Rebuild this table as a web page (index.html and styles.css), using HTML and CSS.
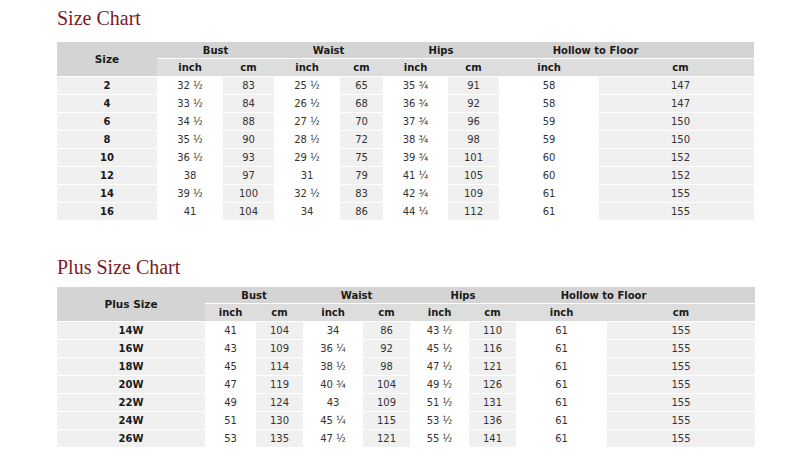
FILE: index.html
```html
<!DOCTYPE html>
<html>
<head>
<meta charset="utf-8">
<link rel="stylesheet" href="styles.css">
</head>
<body>
<div class="page">
  <h2 class="title first">Size Chart</h2>
  <table class="chart t1">
    <colgroup><col><col><col><col><col><col><col><col><col></colgroup>
    <thead>
      <tr class="h1"><th rowspan="2" class="lead">Size</th><th colspan="2">Bust</th><th colspan="2">Waist</th><th colspan="2">Hips</th><th colspan="2" class="hollow">Hollow to Floor</th></tr>
      <tr class="h2"><th>inch</th><th>cm</th><th>inch</th><th>cm</th><th>inch</th><th>cm</th><th>inch</th><th>cm</th></tr>
    </thead>
    <tbody>
      <tr><td>2</td><td>32 ½</td><td>83</td><td>25 ½</td><td>65</td><td>35 ¾</td><td>91</td><td>58</td><td>147</td></tr>
      <tr><td>4</td><td>33 ½</td><td>84</td><td>26 ½</td><td>68</td><td>36 ¾</td><td>92</td><td>58</td><td>147</td></tr>
      <tr><td>6</td><td>34 ½</td><td>88</td><td>27 ½</td><td>70</td><td>37 ¾</td><td>96</td><td>59</td><td>150</td></tr>
      <tr><td>8</td><td>35 ½</td><td>90</td><td>28 ½</td><td>72</td><td>38 ¾</td><td>98</td><td>59</td><td>150</td></tr>
      <tr><td>10</td><td>36 ½</td><td>93</td><td>29 ½</td><td>75</td><td>39 ¾</td><td>101</td><td>60</td><td>152</td></tr>
      <tr><td>12</td><td>38</td><td>97</td><td>31</td><td>79</td><td>41 ¼</td><td>105</td><td>60</td><td>152</td></tr>
      <tr><td>14</td><td>39 ½</td><td>100</td><td>32 ½</td><td>83</td><td>42 ¾</td><td>109</td><td>61</td><td>155</td></tr>
      <tr><td>16</td><td>41</td><td>104</td><td>34</td><td>86</td><td>44 ¼</td><td>112</td><td>61</td><td>155</td></tr>
    </tbody>
  </table>

  <h2 class="title second">Plus Size Chart</h2>
  <table class="chart t2">
    <colgroup><col><col><col><col><col><col><col><col><col></colgroup>
    <thead>
      <tr class="h1"><th rowspan="2" class="lead">Plus Size</th><th colspan="2">Bust</th><th colspan="2">Waist</th><th colspan="2">Hips</th><th colspan="2" class="hollow">Hollow to Floor</th></tr>
      <tr class="h2"><th>inch</th><th>cm</th><th>inch</th><th>cm</th><th>inch</th><th>cm</th><th>inch</th><th>cm</th></tr>
    </thead>
    <tbody>
      <tr><td>14W</td><td>41</td><td>104</td><td>34</td><td>86</td><td>43 ½</td><td>110</td><td>61</td><td>155</td></tr>
      <tr><td>16W</td><td>43</td><td>109</td><td>36 ¼</td><td>92</td><td>45 ½</td><td>116</td><td>61</td><td>155</td></tr>
      <tr><td>18W</td><td>45</td><td>114</td><td>38 ½</td><td>98</td><td>47 ½</td><td>121</td><td>61</td><td>155</td></tr>
      <tr><td>20W</td><td>47</td><td>119</td><td>40 ¾</td><td>104</td><td>49 ½</td><td>126</td><td>61</td><td>155</td></tr>
      <tr><td>22W</td><td>49</td><td>124</td><td>43</td><td>109</td><td>51 ½</td><td>131</td><td>61</td><td>155</td></tr>
      <tr><td>24W</td><td>51</td><td>130</td><td>45 ¼</td><td>115</td><td>53 ½</td><td>136</td><td>61</td><td>155</td></tr>
      <tr><td>26W</td><td>53</td><td>135</td><td>47 ½</td><td>121</td><td>55 ½</td><td>141</td><td>61</td><td>155</td></tr>
    </tbody>
  </table>
</div>
</body>
</html>
```

FILE: styles.css
```css
html, body {
  margin: 0;
  padding: 0;
  background: #ffffff;
}

.page {
  padding-left: 57px;
  padding-top: 6px;
}

.title {
  margin: 0;
  font-family: "Liberation Serif", "Times New Roman", serif;
  font-weight: normal;
  font-size: 20px;
  line-height: 24px;
  color: #7a1b25;
}

.title.first {
  margin-bottom: 11px;
}

.title.second {
  margin-top: 34px;
  margin-bottom: 7px;
}

.chart {
  border-collapse: separate;
  border-spacing: 0 1px;
  table-layout: fixed;
  font-family: "DejaVu Sans", Verdana, sans-serif;
  font-size: 10px;
  color: #333333;
}

.chart th,
.chart td {
  padding: 0;
  text-align: center;
  vertical-align: middle;
  white-space: nowrap;
}

.chart th {
  font-weight: bold;
  color: #1a1a1a;
}

.chart .h1 th {
  height: 16px;
  background: #d4d4d4;
}

.chart .h1 th.lead {
  font-size: 10.5px;
}

.t1 .h1 th.hollow {
  padding-right: 62px;
}

.t2 .h1 th.hollow {
  padding-right: 64px;
}

.chart .h2 th {
  height: 17px;
  background: #dddddd;
}

.chart td {
  height: 17px;
  background: #ffffff;
}

.chart td:nth-child(odd) {
  background: #f0f0f0;
}

.chart td:first-child {
  font-weight: bold;
  color: #1a1a1a;
}

.t1 td:last-child,
.t1 .h2 th:last-child {
  padding-left: 8px;
}

.t1 { width: 697px; }
.t1 col:nth-child(1) { width: 100px; }
.t1 col:nth-child(2) { width: 66px; }
.t1 col:nth-child(3) { width: 51px; }
.t1 col:nth-child(4) { width: 66px; }
.t1 col:nth-child(5) { width: 43px; }
.t1 col:nth-child(6) { width: 65px; }
.t1 col:nth-child(7) { width: 51px; }
.t1 col:nth-child(8) { width: 100px; }
.t1 col:nth-child(9) { width: 155px; }

.t2 { width: 698px; }
.t2 col:nth-child(1) { width: 148px; }
.t2 col:nth-child(2) { width: 51px; }
.t2 col:nth-child(3) { width: 47px; }
.t2 col:nth-child(4) { width: 60px; }
.t2 col:nth-child(5) { width: 47px; }
.t2 col:nth-child(6) { width: 59px; }
.t2 col:nth-child(7) { width: 47px; }
.t2 col:nth-child(8) { width: 91px; }
.t2 col:nth-child(9) { width: 148px; }
```
